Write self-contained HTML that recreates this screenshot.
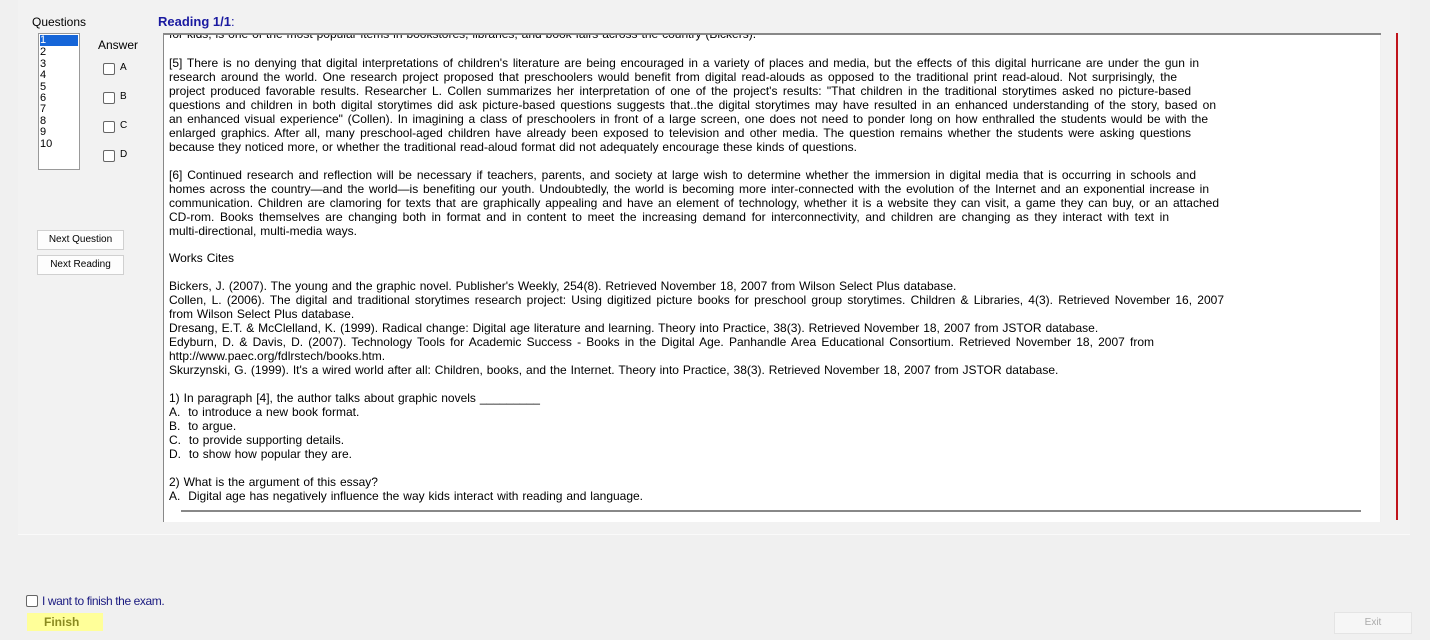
<!DOCTYPE html>
<html><head><meta charset="utf-8"><style>
body{margin:0;width:1430px;height:640px;background:#f0f0f0;font-family:"Liberation Sans",sans-serif;position:relative;overflow:hidden;color:#000}
.a{position:absolute}
.panel{left:18px;top:0;width:1392px;height:534px;background:#f2f2f2;border-bottom:1px solid #fafafa}
.box{left:163px;top:33px;width:1217px;height:487px;background:#fff;border-left:1px solid #888;border-top:2px solid #888;overflow:hidden}
.l{position:absolute;left:5px;font-size:12px;line-height:14px;white-space:nowrap;text-align:justify;text-align-last:justify}
.n{text-align-last:left;word-spacing:0.6px}
.cb{width:10px;height:10px;border:1px solid #666;border-radius:2px;background:#fff;position:absolute}
.btn{background:#fdfdfd;border:1px solid #d0d0d0;font-size:10px;text-align:center;line-height:18px}
</style></head><body>
<div class="a panel"></div>
<div class="a" style="left:32px;top:15px;font-size:12px">Questions</div>
<div class="a" style="left:158px;top:14px;font-size:13px;color:#1a1aa0;font-weight:bold">Reading 1/1<span style="font-weight:normal">:</span></div>
<div class="a" style="left:38px;top:33px;width:40px;height:135px;background:#fff;border:1px solid #999;font-size:11px;line-height:11.4px">
<div style="background:#1565d8;color:#fff;margin:1px">1</div><div style="padding-left:1px">2<br>3<br>4<br>5<br>6<br>7<br>8<br>9<br>10</div></div>
<div class="a" style="left:98px;top:38px;font-size:12px">Answer</div>
<div class="cb" style="left:103px;top:63px"></div><div class="a" style="left:120px;top:62px;font-size:10px">A</div>
<div class="cb" style="left:103px;top:92px"></div><div class="a" style="left:120px;top:91px;font-size:10px">B</div>
<div class="cb" style="left:103px;top:121px"></div><div class="a" style="left:120px;top:120px;font-size:10px">C</div>
<div class="cb" style="left:103px;top:150px"></div><div class="a" style="left:120px;top:149px;font-size:10px">D</div>
<div class="a btn" style="left:37px;top:230px;width:85px;height:18px">Next Question</div>
<div class="a btn" style="left:37px;top:255px;width:85px;height:18px">Next Reading</div>
<div class="a box">
<div class="l n" style="top:-8px">for kids, is one of the most popular items in bookstores, libraries, and book fairs across the country (Bickers).</div>
<div class="l" style="top:21px;width:1030px">[5] There is no denying that digital interpretations of children's literature are being encouraged in a variety of places and media, but the effects of this digital hurricane are under the gun in</div>
<div class="l" style="top:35px;width:1008px">research around the world. One research project proposed that preschoolers would benefit from digital read-alouds as opposed to the traditional print read-aloud. Not surprisingly, the</div>
<div class="l" style="top:49px;width:1022px">project produced favorable results. Researcher L. Collen summarizes her interpretation of one of the project's results: "That children in the traditional storytimes asked no picture-based</div>
<div class="l" style="top:63px;width:1047px">questions and children in both digital storytimes did ask picture-based questions suggests that..the digital storytimes may have resulted in an enhanced understanding of the story, based on</div>
<div class="l" style="top:77px;width:1039px">an enhanced visual experience" (Collen). In imagining a class of preschoolers in front of a large screen, one does not need to ponder long on how enthralled the students would be with the</div>
<div class="l" style="top:91px;width:1022px">enlarged graphics. After all, many preschool-aged children have already been exposed to television and other media. The question remains whether the students were asking questions</div>
<div class="l n" style="top:105px">because they noticed more, or whether the traditional read-aloud format did not adequately encourage these kinds of questions.</div>
<div class="l" style="top:133px;width:1027px">[6] Continued research and reflection will be necessary if teachers, parents, and society at large wish to determine whether the immersion in digital media that is occurring in schools and</div>
<div class="l" style="top:147px;width:1040px">homes across the country&mdash;and the world&mdash;is benefiting our youth. Undoubtedly, the world is becoming more inter-connected with the evolution of the Internet and an exponential increase in</div>
<div class="l" style="top:161px;width:1050px">communication. Children are clamoring for texts that are graphically appealing and have an element of technology, whether it is a website they can visit, a game they can buy, or an attached</div>
<div class="l" style="top:175px;width:1000px">CD-rom. Books themselves are changing both in format and in content to meet the increasing demand for interconnectivity, and children are changing as they interact with text in</div>
<div class="l n" style="top:189px">multi-directional, multi-media ways.</div>
<div class="l n" style="top:216px">Works Cites</div>
<div class="l n" style="top:244px">Bickers, J. (2007). The young and the graphic novel. Publisher's Weekly, 254(8). Retrieved November 18, 2007 from Wilson Select Plus database.</div>
<div class="l" style="top:258px;width:1055px">Collen, L. (2006). The digital and traditional storytimes research project: Using digitized picture books for preschool group storytimes. Children &amp; Libraries, 4(3). Retrieved November 16, 2007</div>
<div class="l n" style="top:272px">from Wilson Select Plus database.</div>
<div class="l n" style="top:286px">Dresang, E.T. &amp; McClelland, K. (1999). Radical change: Digital age literature and learning. Theory into Practice, 38(3). Retrieved November 18, 2007 from JSTOR database.</div>
<div class="l" style="top:300px;width:985px">Edyburn, D. &amp; Davis, D. (2007). Technology Tools for Academic Success - Books in the Digital Age. Panhandle Area Educational Consortium. Retrieved November 18, 2007 from</div>
<div class="l n" style="top:314px">http://www.paec.org/fdlrstech/books.htm.</div>
<div class="l n" style="top:328px">Skurzynski, G. (1999). It's a wired world after all: Children, books, and the Internet. Theory into Practice, 38(3). Retrieved November 18, 2007 from JSTOR database.</div>
<div class="l n" style="top:356px">1) In paragraph [4], the author talks about graphic novels _________</div>
<div class="l n" style="top:370px">A.&nbsp; to introduce a new book format.</div>
<div class="l n" style="top:384px">B.&nbsp; to argue.</div>
<div class="l n" style="top:398px">C.&nbsp; to provide supporting details.</div>
<div class="l n" style="top:412px">D.&nbsp; to show how popular they are.</div>
<div class="l n" style="top:440px">2) What is the argument of this essay?</div>
<div class="l n" style="top:454px">A.&nbsp; Digital age has negatively influence the way kids interact with reading and language.</div>
<div style="position:absolute;left:17px;top:475px;width:1180px;height:2px;background:#888"></div>
<div style="position:absolute;left:1216px;top:0;width:17px;height:487px;background:#f0f0f0"></div>
<div style="position:absolute;left:1222px;top:143px;width:2px;height:87px;background:#888"></div>
</div>
<div class="a" style="left:1396px;top:33px;width:2px;height:487px;background:#c0141c"></div>
<div class="cb" style="left:26px;top:595px"></div>
<div class="a" style="left:42px;top:594px;font-size:12px;color:#1a1a80;letter-spacing:-0.4px">I want to finish the exam.</div>
<div class="a" style="left:27px;top:613px;width:76px;height:18px;background:#ffff99;color:#8a8a20;font-size:12px;font-weight:bold;line-height:18px;padding-left:17px;box-sizing:border-box">Finish</div>
<div class="a" style="left:1334px;top:612px;width:76px;height:20px;background:#f6f6f6;border:1px solid #e4e4e4;color:#aaa;font-size:10px;text-align:center;line-height:20px">Exit</div>
</body></html>
